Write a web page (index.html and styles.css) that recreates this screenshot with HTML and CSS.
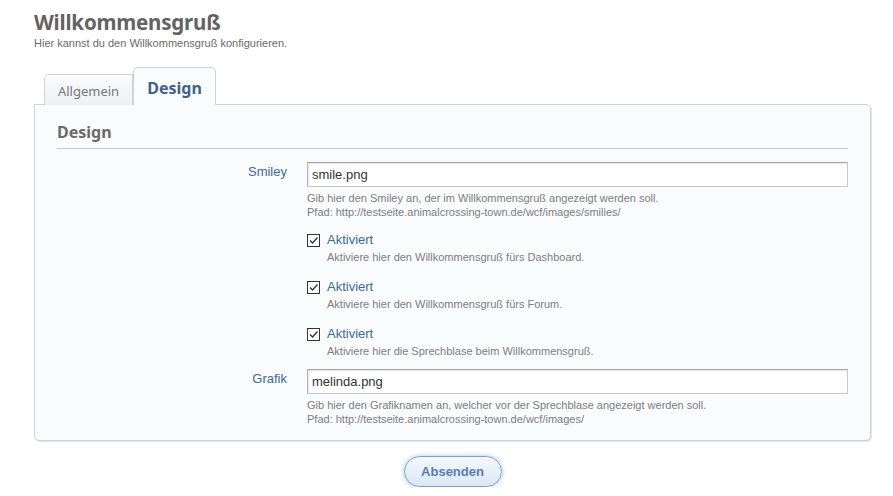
FILE: index.html
```html
<!DOCTYPE html>
<html lang="de">
<head>
<meta charset="utf-8">
<title>Willkommensgruß</title>
<link rel="stylesheet" href="styles.css">
</head>
<body>
<div class="page">
  <header class="head">
    <h1 class="title">Willkommensgruß</h1>
    <p class="subtitle">Hier kannst du den Willkommensgruß konfigurieren.</p>
  </header>
  <nav class="tabs">
    <span class="tab">Allgemein</span>
    <span class="tab active">Design</span>
  </nav>
  <section class="panel">
    <h2 class="legend">Design</h2>
    <div class="row">
      <label class="lbl">Smiley</label>
      <div class="field">
        <div class="input">smile.png</div>
        <p class="desc">Gib hier den Smiley an, der im Willkommensgruß angezeigt werden soll.<br>Pfad: http://testseite.animalcrossing-town.de/wcf/images/smilies/</p>
      </div>
    </div>
    <div class="row check-row">
      <span class="lbl"></span>
      <div class="field">
        <div class="check"><svg class="cb" width="13" height="13" viewBox="0 0 13 13"><rect x="0.5" y="0.5" width="12" height="12" fill="#fff" stroke="#333"/><path d="M3 6.5 L5.5 9 L10.5 3.5" fill="none" stroke="#333" stroke-width="1.3"/></svg><span class="clbl">Aktiviert</span></div>
        <p class="desc cdesc">Aktiviere hier den Willkommensgruß fürs Dashboard.</p>
      </div>
    </div>
    <div class="row check-row">
      <span class="lbl"></span>
      <div class="field">
        <div class="check"><svg class="cb" width="13" height="13" viewBox="0 0 13 13"><rect x="0.5" y="0.5" width="12" height="12" fill="#fff" stroke="#333"/><path d="M3 6.5 L5.5 9 L10.5 3.5" fill="none" stroke="#333" stroke-width="1.3"/></svg><span class="clbl">Aktiviert</span></div>
        <p class="desc cdesc">Aktiviere hier den Willkommensgruß fürs Forum.</p>
      </div>
    </div>
    <div class="row check-row">
      <span class="lbl"></span>
      <div class="field">
        <div class="check"><svg class="cb" width="13" height="13" viewBox="0 0 13 13"><rect x="0.5" y="0.5" width="12" height="12" fill="#fff" stroke="#333"/><path d="M3 6.5 L5.5 9 L10.5 3.5" fill="none" stroke="#333" stroke-width="1.3"/></svg><span class="clbl">Aktiviert</span></div>
        <p class="desc cdesc">Aktiviere hier die Sprechblase beim Willkommensgruß.</p>
      </div>
    </div>
    <div class="row last-row">
      <label class="lbl">Grafik</label>
      <div class="field">
        <div class="input">melinda.png</div>
        <p class="desc">Gib hier den Grafiknamen an, welcher vor der Sprechblase angezeigt werden soll.<br>Pfad: http://testseite.animalcrossing-town.de/wcf/images/</p>
      </div>
    </div>
  </section>
  <div class="actions">
    <button class="btn" type="button">Absenden</button>
  </div>
</div>
</body>
</html>
```

FILE: styles.css
```css
* { box-sizing: border-box; }
html, body { margin: 0; padding: 0; background: #fff; }
body { font-family: "Liberation Sans", Arial, sans-serif; color: #666; }
.page { padding: 9px 22px 0 34px; width: 893px; }
.title { margin: 0; font-size: 20.5px; line-height: 26px; font-weight: bold; color: #636363; font-family: "Noto Sans", "Liberation Sans", sans-serif; letter-spacing: -0.2px; }
.subtitle { margin: 1px 0 0; font-size: 11px; line-height: 14px; color: #6a6a6a; }
.tabs { display: flex; align-items: flex-end; margin-top: 18px; padding-left: 10px; height: 37px; position: relative; z-index: 1; margin-bottom: -1px; }
.tab { display: block; font-family: "Noto Sans", "Liberation Sans", sans-serif; }
.tabs .tab:first-child { height: 31px; width: 89px; border: 1px solid #cfd3d8; border-bottom: none; border-radius: 5px 0 0 0; background: linear-gradient(#fbfbfc, #eef0f3); color: #777; font-size: 13px; line-height: 32px; text-align: center; }
.tab.active { height: 38px; width: 83px; border: 1px solid #cfd3d8; border-bottom: none; border-radius: 5px 5px 0 0; background: #fafbfd; color: #3f6285; font-size: 16px; font-weight: bold; line-height: 40px; text-align: center; }
.panel { border: 1px solid #cfd2d6; border-radius: 0 5px 5px 5px; background: #fafbfd; padding: 15px 22px 14px 22px; box-shadow: 1px 1px 1px #e4e4e4; }
.legend { margin: 0; font-family: "Noto Sans", "Liberation Sans", sans-serif; font-size: 16px; line-height: 24px; font-weight: bold; color: #6a6a6a; border-bottom: 1px solid #c5c8cc; padding-bottom: 4px; }
.row { display: flex; gap: 20px; margin-top: 13px; }
.lbl { width: 230px; flex: none; text-align: right; color: #3d6a94; font-size: 13px; line-height: 16px; padding-top: 2px; }
.field { flex: 1; }
.input { height: 25px; border: 1px solid #c8c8c8; border-top-color: #a5a5a5; border-left-color: #b5b5b5; background: #fff; box-shadow: inset 1px 1px 2px #e6e6e6; font-size: 13px; line-height: 23px; padding-left: 4px; color: #333; }
.desc { margin: 4px 0 0; font-size: 11px; line-height: 14px; color: #7d7d7d; }
.check { display: flex; align-items: center; height: 16px; }
.cb { flex: none; margin-right: 7px; }
.clbl { color: #3d6a94; font-size: 13px; line-height: 16px; }
.cdesc { margin-top: 2px; padding-left: 20px; }
.check-row { margin-top: 13px; }
.check-row + .check-row { margin-top: 15px; }
.last-row { margin-top: 11px; }
.actions { display: flex; justify-content: center; padding-top: 15px; }
.btn { width: 98px; height: 31px; border: 1px solid #7f9fc8; border-radius: 16px; background: linear-gradient(#f4f8fd, #dbe7f5); box-shadow: 0 0 5px #a9c3e3; color: #5a7ea9; font-family: "Liberation Sans", sans-serif; font-weight: bold; font-size: 13px; }
```
